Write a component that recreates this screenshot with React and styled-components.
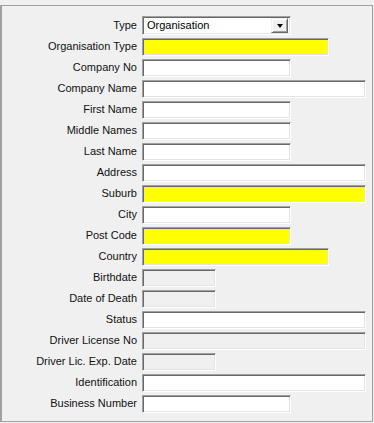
import React from "react";
import styled, { createGlobalStyle } from "styled-components";

const GlobalStyle = createGlobalStyle`
  html, body {
    margin: 0;
    padding: 0;
    background: #f0f0f0;
  }
  body {
    font-family: "Liberation Sans", Arial, sans-serif;
    font-size: 11px;
    color: #000;
  }
`;

const Panel = styled.div`
  box-sizing: border-box;
  margin-top: 5px;
  width: 373px;
  height: 417px;
  border: 1px solid #a0a0a0;
  border-left-width: 2px;
  padding-top: 11px;
`;

const Form = styled.div`
  display: grid;
  grid-template-columns: 135px auto;
  grid-auto-rows: 21px;
  column-gap: 5px;
`;

const Label = styled.label`
  text-align: right;
  line-height: 17px;
  white-space: nowrap;
  color: #111;
`;

const widths = {
  tiny: 74,
  short: 149,
  medium: 187,
  long: 224,
};

const Field = styled.div`
  box-sizing: border-box;
  width: ${(p) => widths[p.$size]}px;
  height: 18px;
  border: 1px solid;
  border-color: #a0a0a0 #fff #fff #a0a0a0;
  box-shadow: inset 1px 1px 0 #696969, inset -1px -1px 0 #e3e3e3;
  background: ${(p) =>
    p.$tone === "required" ? "#ffff00" : p.$tone === "disabled" ? "#f0f0f0" : "#fff"};
`;

const Select = styled(Field)`
  display: flex;
  align-items: center;
  justify-content: space-between;
  height: 19px;
  margin-top: -1px;
  padding: 2px 2px 2px 4px;
  line-height: 15px;
`;

const DropButton = styled.span`
  box-sizing: border-box;
  width: 17px;
  height: 15px;
  display: flex;
  align-items: center;
  justify-content: center;
  background: #f0f0f0;
  border: 1px solid;
  border-color: #f0f0f0 #696969 #696969 #f0f0f0;
  box-shadow: inset 1px 1px 0 #fff, inset -1px -1px 0 #a0a0a0;
`;

const Arrow = styled.span`
  width: 0;
  height: 0;
  border-left: 3.5px solid transparent;
  border-right: 3.5px solid transparent;
  border-top: 4px solid #000;
`;

const rows = [
  ["Organisation Type", "medium", "required"],
  ["Company No", "short"],
  ["Company Name", "long"],
  ["First Name", "short"],
  ["Middle Names", "short"],
  ["Last Name", "short"],
  ["Address", "long"],
  ["Suburb", "long", "required"],
  ["City", "short"],
  ["Post Code", "short", "required"],
  ["Country", "medium", "required"],
  ["Birthdate", "tiny", "disabled"],
  ["Date of Death", "tiny", "disabled"],
  ["Status", "long"],
  ["Driver License No", "long", "disabled"],
  ["Driver Lic. Exp. Date", "tiny", "disabled"],
  ["Identification", "long"],
  ["Business Number", "short"],
];

export default function App() {
  return (
    <>
      <GlobalStyle />
      <Panel>
        <Form>
          <Label>Type</Label>
          <Select $size="short">
            <span>Organisation</span>
            <DropButton>
              <Arrow />
            </DropButton>
          </Select>
          {rows.map(([label, size, tone]) => (
            <React.Fragment key={label}>
              <Label>{label}</Label>
              <Field $size={size} $tone={tone} />
            </React.Fragment>
          ))}
        </Form>
      </Panel>
    </>
  );
}
